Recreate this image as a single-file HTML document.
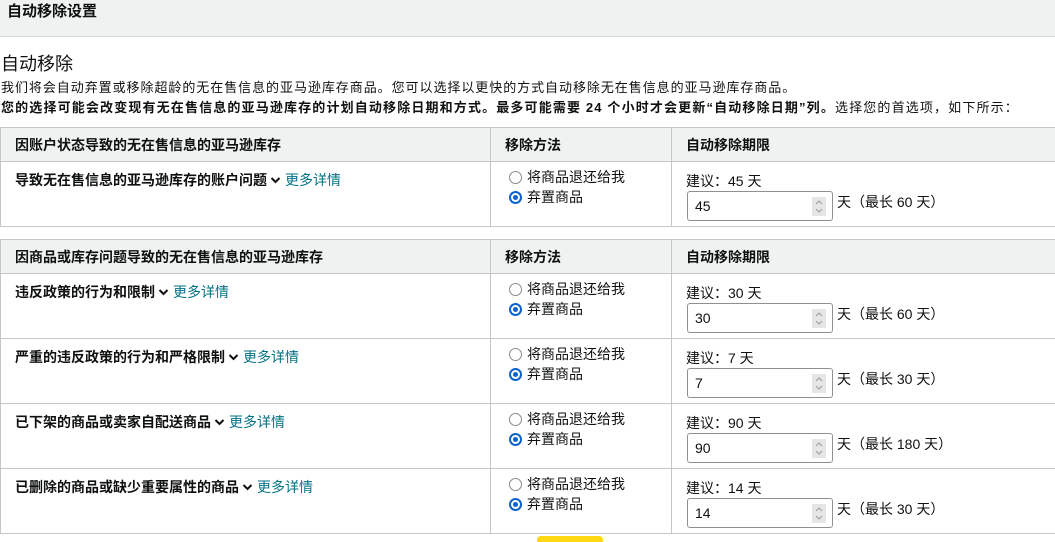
<!DOCTYPE html>
<html><head><meta charset="utf-8"><style>
*{margin:0;padding:0;box-sizing:border-box}
body{width:1055px;height:539px;overflow:hidden;background:#fff;font-family:"Liberation Sans","Noto Sans CJK SC",sans-serif;font-size:14px;color:#0f1111;position:relative}
.a{position:absolute;white-space:nowrap;line-height:18px}
.hdr{position:absolute;left:0;top:0;width:1055px;height:37px;background:#f0f2f2;border-bottom:1px solid #d5d9d9}
.hl{position:absolute;height:1px;background:#c4c7c7;left:0;width:1055px}
.vl{position:absolute;width:1px;background:#c4c7c7}
.th{position:absolute;background:#f0f2f2;left:0;width:1055px;height:34px}
b{font-weight:700}
.lnk{color:#007185}
.r{position:absolute;width:13px;height:13px;border-radius:50%;border:1.5px solid #8a8a8f;background:#fff}
.r.on{border:2px solid #0b63ce}
.r.on:after{content:"";position:absolute;left:2px;top:2px;width:5px;height:5px;border-radius:50%;background:#0b63ce}
.in{position:absolute;width:146px;height:30px;border:1px solid #8d9096;border-radius:3px;background:#fff}
.sp{position:absolute;right:6px;top:5px;width:14px;height:19px;background:#e6e6e6}
.ch{display:inline-block;width:11px;height:8px;margin:0 4px 0 3px;vertical-align:1px}
</style></head><body>
<svg width="0" height="0" style="position:absolute"><defs><symbol id="c" viewBox="0 0 11 8"><path d="M1.5 2 L5.5 6 L9.5 2" fill="none" stroke="#0f1111" stroke-width="2"/></symbol><symbol id="s" viewBox="0 0 14 19"><path d="M4 7 L7 4 L10 7 M4 12 L7 15 L10 12" fill="none" stroke="#9a9a9a" stroke-width="1"/></symbol></defs></svg>
<div class="hdr"></div>
<div class="a" style="left:7px;top:2px;font-size:15px;font-weight:700;line-height:20px">自动移除设置</div>
<div class="a" style="left:1px;top:52px;font-size:18px;line-height:24px">自动移除</div>
<div class="a" style="left:1px;top:79px;font-size:13px;letter-spacing:0.95px">我们将会自动弃置或移除超龄的无在售信息的亚马逊库存商品。您可以选择以更快的方式自动移除无在售信息的亚马逊库存商品。</div>
<div class="a" style="left:1px;top:99px;font-size:13px;letter-spacing:1.15px"><b>您的选择可能会改变现有无在售信息的亚马逊库存的计划自动移除日期和方式。最多可能需要 24 个小时才会更新“自动移除日期”列。</b>选择您的首选项，如下所示：</div>

<div class="th" style="top:127px"></div>
<div class="hl" style="top:127px"></div>
<div class="hl" style="top:161px"></div>
<div class="hl" style="top:226px"></div>
<div class="vl" style="left:0;top:127px;height:100px"></div>
<div class="vl" style="left:490px;top:127px;height:100px"></div>
<div class="vl" style="left:671px;top:127px;height:100px"></div>
<div class="a" style="left:15px;top:136px"><b>因账户状态导致的无在售信息的亚马逊库存</b></div>
<div class="a" style="left:505px;top:136px"><b>移除方法</b></div>
<div class="a" style="left:686px;top:136px"><b>自动移除期限</b></div>

<div class="th" style="top:239px"></div>
<div class="hl" style="top:239px"></div>
<div class="hl" style="top:273px"></div>
<div class="hl" style="top:338px"></div>
<div class="hl" style="top:403px"></div>
<div class="hl" style="top:468px"></div>
<div class="hl" style="top:533px"></div>
<div class="vl" style="left:0;top:239px;height:295px"></div>
<div class="vl" style="left:490px;top:239px;height:295px"></div>
<div class="vl" style="left:671px;top:239px;height:295px"></div>
<div class="a" style="left:15px;top:248px"><b>因商品或库存问题导致的无在售信息的亚马逊库存</b></div>
<div class="a" style="left:505px;top:248px"><b>移除方法</b></div>
<div class="a" style="left:686px;top:248px"><b>自动移除期限</b></div>
<div style="position:absolute;left:537px;top:536px;width:66px;height:6px;background:#ffd814;border-radius:4px 4px 0 0"></div>

<div class="a" style="left:15px;top:171px"><b>导致无在售信息的亚马逊库存的账户问题</b><svg class="ch"><use href="#c"/></svg><span class="lnk">更多详情</span></div>
<div class="r" style="left:509px;top:171px"></div><div class="a" style="left:527px;top:168px">将商品退还给我</div>
<div class="r on" style="left:509px;top:191px"></div><div class="a" style="left:527px;top:188px">弃置商品</div>
<div class="a" style="left:686px;top:172px">建议：45 天</div>
<div class="in" style="left:687px;top:191px"><span class="a" style="left:7px;top:5px">45</span><svg class="sp"><use href="#s"/></svg></div>
<div class="a" style="left:837px;top:193px">天（最长 60 天）</div>

<div class="a" style="left:15px;top:283px"><b>违反政策的行为和限制</b><svg class="ch"><use href="#c"/></svg><span class="lnk">更多详情</span></div>
<div class="r" style="left:509px;top:283px"></div><div class="a" style="left:527px;top:280px">将商品退还给我</div>
<div class="r on" style="left:509px;top:303px"></div><div class="a" style="left:527px;top:300px">弃置商品</div>
<div class="a" style="left:686px;top:284px">建议：30 天</div>
<div class="in" style="left:687px;top:303px"><span class="a" style="left:7px;top:5px">30</span><svg class="sp"><use href="#s"/></svg></div>
<div class="a" style="left:837px;top:305px">天（最长 60 天）</div>

<div class="a" style="left:15px;top:348px"><b>严重的违反政策的行为和严格限制</b><svg class="ch"><use href="#c"/></svg><span class="lnk">更多详情</span></div>
<div class="r" style="left:509px;top:348px"></div><div class="a" style="left:527px;top:345px">将商品退还给我</div>
<div class="r on" style="left:509px;top:368px"></div><div class="a" style="left:527px;top:365px">弃置商品</div>
<div class="a" style="left:686px;top:349px">建议：7 天</div>
<div class="in" style="left:687px;top:368px"><span class="a" style="left:7px;top:5px">7</span><svg class="sp"><use href="#s"/></svg></div>
<div class="a" style="left:837px;top:370px">天（最长 30 天）</div>

<div class="a" style="left:15px;top:413px"><b>已下架的商品或卖家自配送商品</b><svg class="ch"><use href="#c"/></svg><span class="lnk">更多详情</span></div>
<div class="r" style="left:509px;top:413px"></div><div class="a" style="left:527px;top:410px">将商品退还给我</div>
<div class="r on" style="left:509px;top:433px"></div><div class="a" style="left:527px;top:430px">弃置商品</div>
<div class="a" style="left:686px;top:414px">建议：90 天</div>
<div class="in" style="left:687px;top:433px"><span class="a" style="left:7px;top:5px">90</span><svg class="sp"><use href="#s"/></svg></div>
<div class="a" style="left:837px;top:435px">天（最长 180 天）</div>

<div class="a" style="left:15px;top:478px"><b>已删除的商品或缺少重要属性的商品</b><svg class="ch"><use href="#c"/></svg><span class="lnk">更多详情</span></div>
<div class="r" style="left:509px;top:478px"></div><div class="a" style="left:527px;top:475px">将商品退还给我</div>
<div class="r on" style="left:509px;top:498px"></div><div class="a" style="left:527px;top:495px">弃置商品</div>
<div class="a" style="left:686px;top:479px">建议：14 天</div>
<div class="in" style="left:687px;top:498px"><span class="a" style="left:7px;top:5px">14</span><svg class="sp"><use href="#s"/></svg></div>
<div class="a" style="left:837px;top:500px">天（最长 30 天）</div>
</body></html>
